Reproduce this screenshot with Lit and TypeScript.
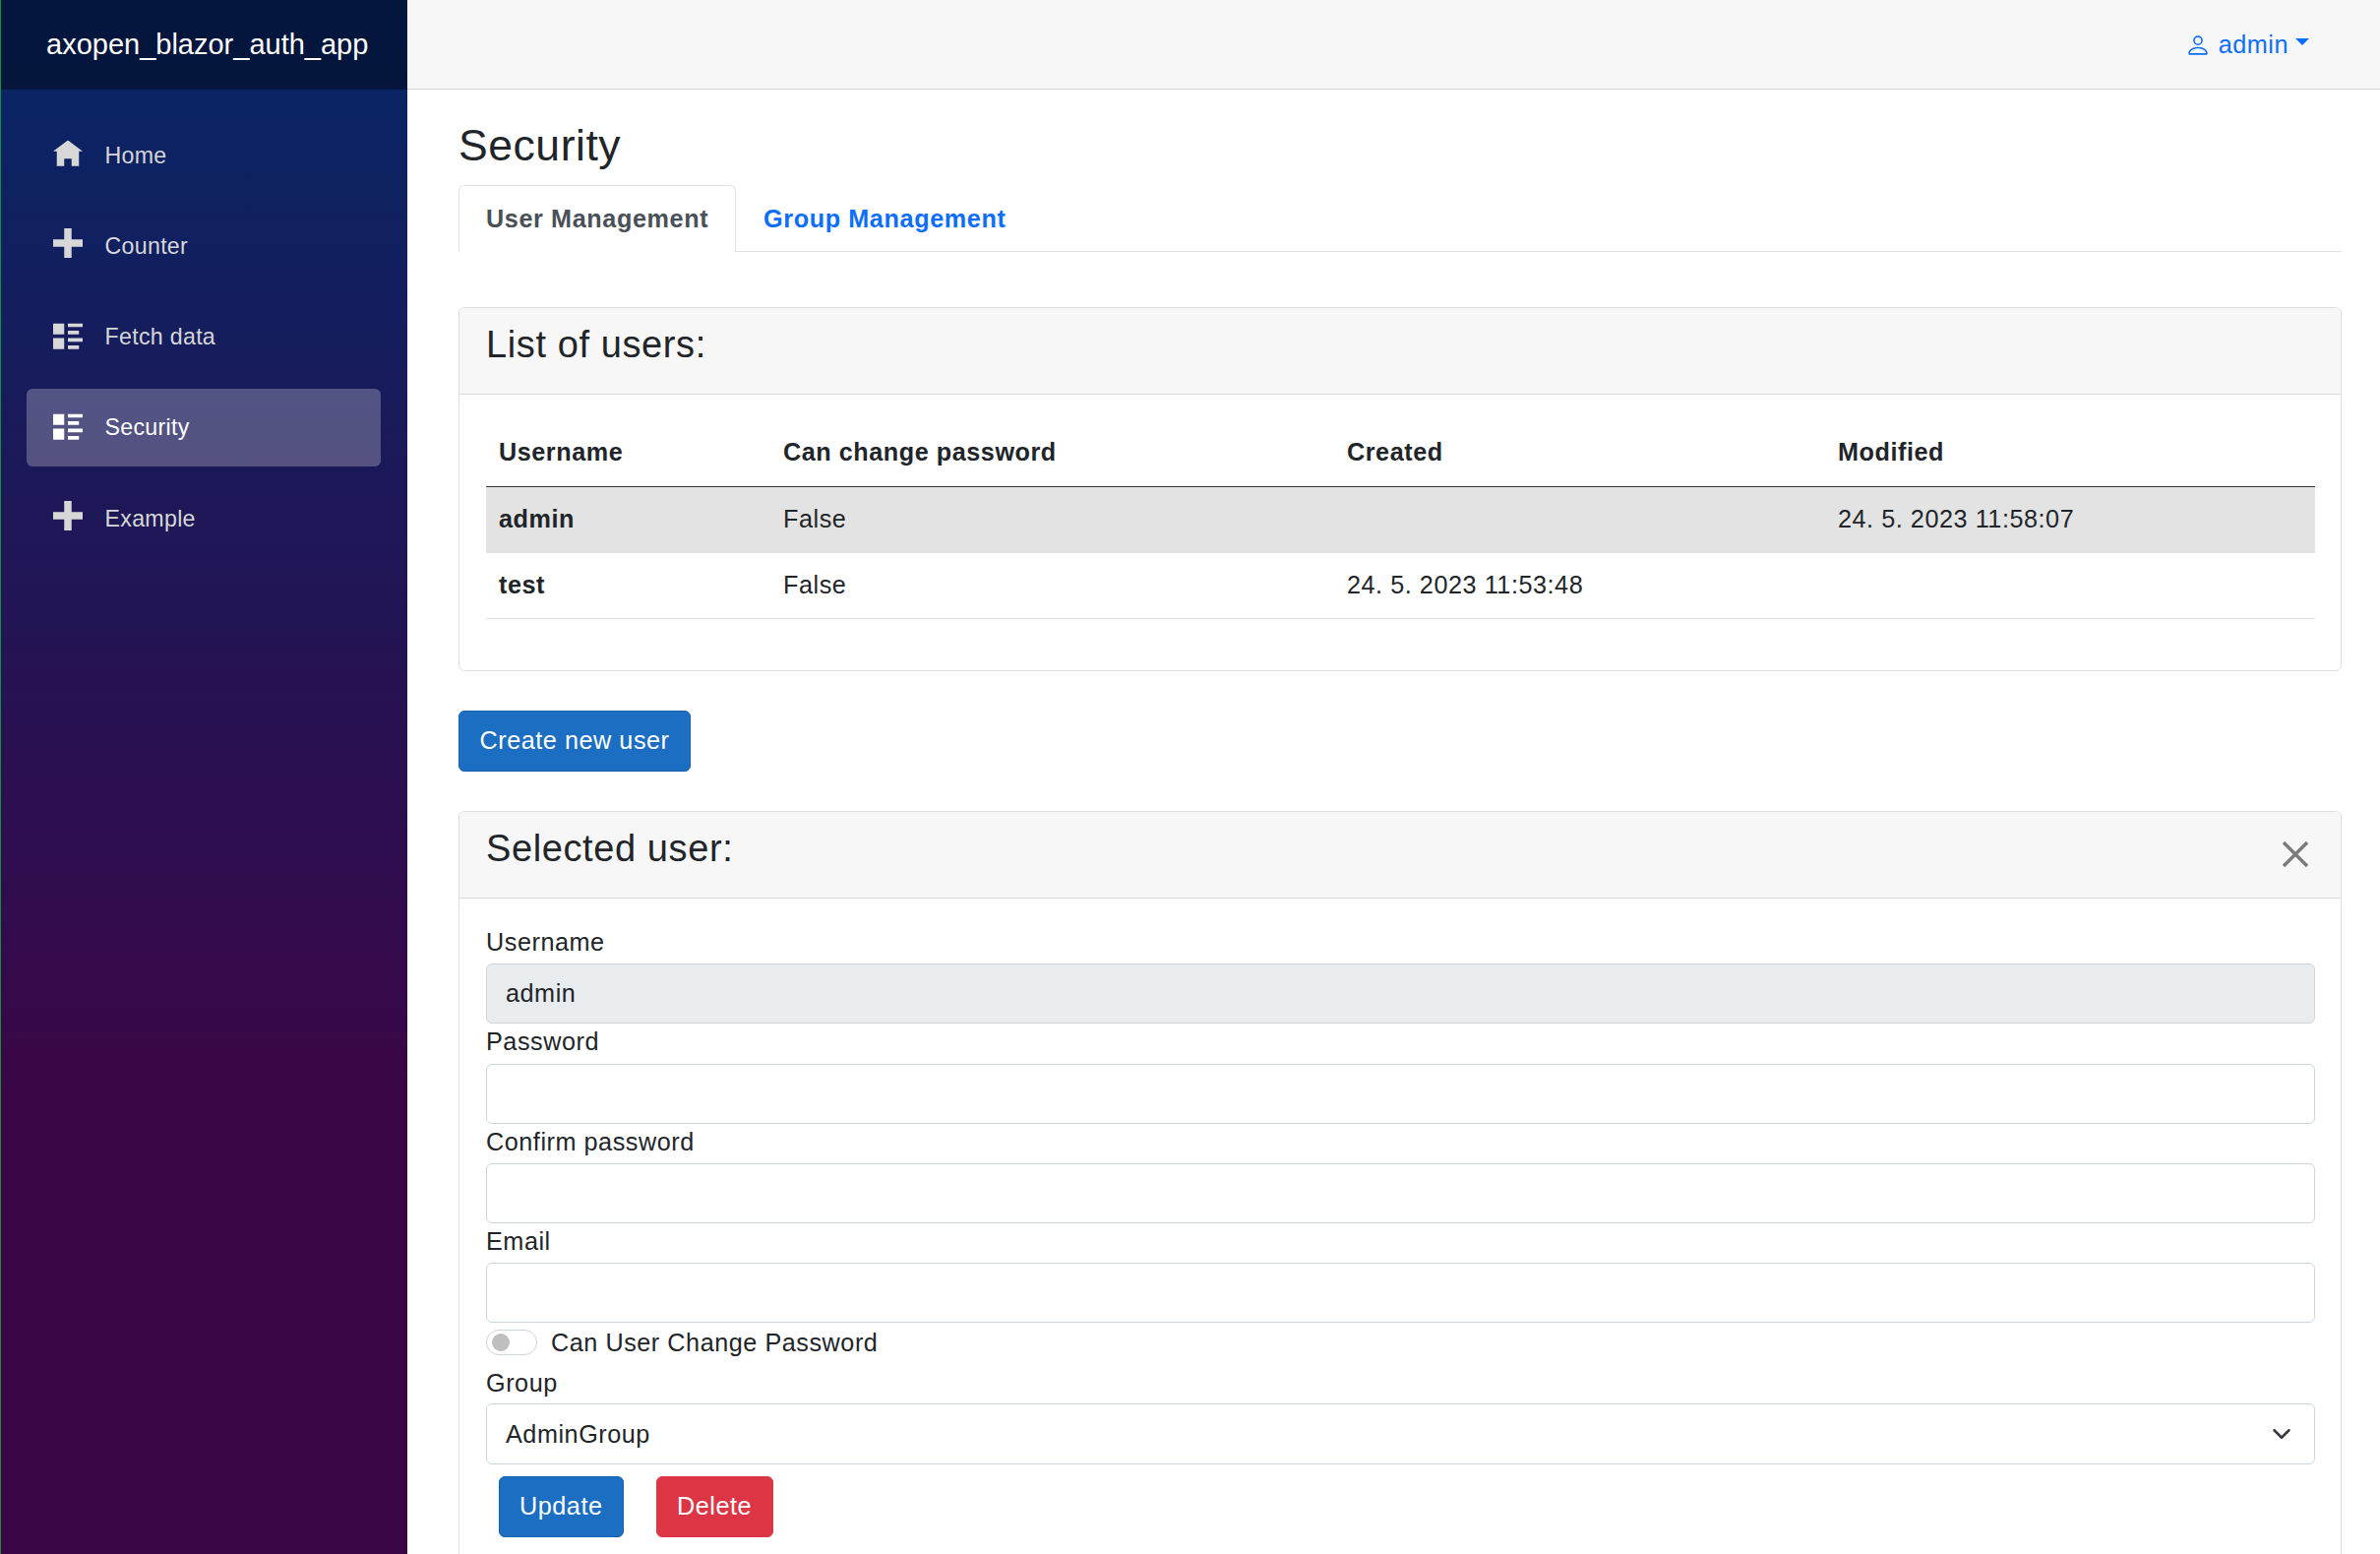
import { LitElement, html, css, svg } from "lit";
import { customElement } from "lit/decorators.js";

const ICONS: Record<string, string> = {
  home: "M4 0l-4 3h1v4h2v-2h2v2h2v-4.03l1 .03-4-3z",
  plus: "M3 0v3h-3v2h3v3h2v-3h3v-2h-3v-3h-2z",
  list: "M0 0v3h3v-3h-3zm4 0v1h4v-1h-4zm0 2v1h3v-1h-3zm-4 2v3h3v-3h-3zm4 0v1h4v-1h-4zm0 2v1h3v-1h-3z",
};
const NAV = [
  { label: "Home", icon: "home" },
  { label: "Counter", icon: "plus" },
  { label: "Fetch data", icon: "list" },
  { label: "Security", icon: "list", active: true },
  { label: "Example", icon: "plus" },
];
const USERS = [
  { name: "admin", change: "False", created: "", modified: "24. 5. 2023 11:58:07", selected: true },
  { name: "test", change: "False", created: "24. 5. 2023 11:53:48", modified: "", selected: false },
];

@customElement("app-root")
export class AppRoot extends LitElement {
  static styles = css`
    :host {
      display: flex;
      width: 2419px;
      height: 1579px;
      overflow: hidden;
      background: #fff;
      color: #212529;
      font-family: "Liberation Sans", Arial, sans-serif;
      font-size: 25.2px;
      letter-spacing: 0.55px;
      line-height: 37px;
    }
    * { box-sizing: border-box; }
    .sidebar {
      width: 414px;
      flex: none;
      border-left: 1px solid #12903f;
      background: linear-gradient(180deg, #052767 0%, #3a0647 70%);
      display: flex;
      flex-direction: column;
    }
    .brand {
      height: 91px;
      margin-bottom: 27px;
      background: rgba(0, 0, 0, 0.4);
      color: #fff;
      font-size: 29px;
      letter-spacing: 0;
      display: flex;
      align-items: center;
      padding-left: 46px;
    }
    .nav { display: flex; flex-direction: column; gap: 13.3px; padding: 0 26px; }
    .nav-link {
      height: 79px;
      display: flex;
      align-items: center;
      padding: 1px 0 0 27px;
      border-radius: 6px;
      color: #d7d7d7;
      font-size: 23.2px;
      letter-spacing: 0.3px;
      width: 360px;
    }
    .nav-link.active { background: rgba(255, 255, 255, 0.25); color: #fff; }
    .nav-link svg { width: 30px; height: 30px; fill: currentColor; margin-right: 22.5px; flex: none; }
    .nav-link svg.home { transform: translateY(-0.5px); }
    .nav-link svg.plus { transform: translateY(-3px); }
    .nav-link svg.list { transform: translateY(0.5px); }
    .main { flex: 1; min-width: 0; display: flex; flex-direction: column; }
    .topbar {
      height: 91px;
      flex: none;
      background: #f7f7f7;
      border-bottom: 1px solid #d6d5d5;
      display: flex;
      align-items: center;
      justify-content: flex-end;
      padding-right: 72px;
      color: #0d6efd;
    }
    .topbar .person { width: 26px; height: 26px; fill: currentColor; margin-right: 8px; margin-top: 2px; }
    .caret {
      width: 0; height: 0; margin-left: 7px; margin-bottom: 6px;
      border-top: 7px solid currentColor;
      border-left: 7px solid transparent;
      border-right: 7px solid transparent;
    }
    .content { padding: 31px 39.5px 0 52px; }
    h3 { margin: 0 0 14px; font-weight: 400; font-size: 44.5px; line-height: 52px; letter-spacing: 0.55px; }
    .tabs { display: flex; height: 68px; border-bottom: 1px solid #dee2e6; margin-bottom: 56px; }
    .tab {
      height: 68px;
      width: 282px;
      padding: 0 27px;
      font-weight: 700;
      letter-spacing: 0.62px;
      line-height: 66px;
      color: #0d6efd;
      white-space: nowrap;
      border: 1px solid transparent;
      border-radius: 6px 6px 0 0;
    }
    .tab.active { color: #495057; background: #fff; border-color: #dee2e6 #dee2e6 #fff; }
    .card { border: 1px solid rgba(0, 0, 0, 0.125); border-radius: 6px; }
    .card-header {
      height: 88px;
      position: relative;
      padding: 13px 27px;
      background: #f7f7f7;
      border-bottom: 1px solid rgba(0, 0, 0, 0.125);
      border-radius: 6px 6px 0 0;
    }
    h4 { margin: 0; font-weight: 400; font-size: 38px; line-height: 48px; letter-spacing: 0.6px; }
    .close { position: absolute; right: 32px; top: 29px; width: 28px; height: 28px; stroke: #7b7b7b; stroke-width: 3.4; fill: none; }
    .users-body { padding: 27px 26px 52px 27px; }
    table { width: 100%; border-collapse: collapse; table-layout: fixed; }
    th, td { text-align: left; padding: 0 13px; font-weight: 400; }
    thead th { height: 66px; font-weight: 700; border-bottom: 1px solid #34373a; padding-bottom: 3px; }
    tbody td { height: 67px; padding-bottom: 1px; border-bottom: 1px solid #dee2e6; }
    tbody tr.sel td { background: #e3e3e3; }
    tbody td.name { font-weight: 700; }
    .btn {
      display: inline-flex;
      align-items: center;
      height: 62px;
      padding: 0 20.5px 2px;
      border-radius: 6px;
      border: 1px solid #1861ac;
      background: #1b6ec2;
      color: #fff;
      font: inherit;
      letter-spacing: inherit;
    }
    .btn.danger { background: #dc3545; border-color: #dc3545; }
    .create { margin: 40.5px 0 40px; display: block; }
    .form-body { padding: 26px 26px 40px 27px; }
    label { display: block; margin-bottom: 3.3px; }
    label.tight { margin-bottom: 2.3px; }
    .input {
      display: block;
      width: 100%;
      height: 61px;
      padding: 0 19px;
      border: 1px solid #ced4da;
      border-radius: 6px;
      font: inherit;
      letter-spacing: inherit;
      color: #212529;
      background: #fff;
    }
    .input:disabled { background: #e9ecef; opacity: 1; }
    .switch-row { display: flex; align-items: center; gap: 14px; height: 26px; margin: 7px 0 10px; }
    .switch { position: relative; width: 52px; height: 26px; border: 1px solid #ced4da; border-radius: 13px; background: #fff; flex: none; }
    .switch::after { content: ""; position: absolute; left: 5px; top: 3px; width: 18px; height: 18px; border-radius: 50%; background: #bfbfbf; }
    .select-wrap { position: relative; height: 62px; }
    select.input { height: 62px; appearance: none; -webkit-appearance: none; }
    .chev { position: absolute; right: 24px; top: 21px; width: 20px; height: 20px; fill: none; stroke: #343a40; stroke-width: 2; stroke-linecap: round; stroke-linejoin: round; pointer-events: none; }
    .actions { display: flex; gap: 33px; margin: 12px 0 0 13px; }
    .actions .btn { height: 62px; padding: 0 20px 1px; }
    .actions .btn.danger { padding: 0 20.5px 1px; }
  `;

  private field(name: string, value = "", disabled = false) {
    return html`<label>${name}</label><input class="input" .value=${value} ?disabled=${disabled} />`;
  }

  render() {
    return html`
      <aside class="sidebar">
        <div class="brand">axopen_blazor_auth_app</div>
        <nav class="nav">
          ${NAV.map(
            (n) => html`<a class="nav-link ${n.active ? "active" : ""}">
              <svg class=${n.icon} viewBox="0 0 8 8">${svg`<path d=${ICONS[n.icon]} />`}</svg>${n.label}
            </a>`
          )}
        </nav>
      </aside>
      <div class="main">
        <header class="topbar">
          <svg class="person" viewBox="0 0 16 16"><path d="M8 8a3 3 0 1 0 0-6 3 3 0 0 0 0 6Zm2-3a2 2 0 1 1-4 0 2 2 0 0 1 4 0Zm4 8c0 1-1 1-1 1H3s-1 0-1-1 1-4 6-4 6 3 6 4Zm-1-.004c-.001-.246-.154-.986-.832-1.664C11.516 10.68 10.289 10 8 10c-2.29 0-3.516.68-4.168 1.332-.678.678-.83 1.418-.832 1.664h10Z" /></svg>
          admin<span class="caret"></span>
        </header>
        <div class="content">
          <h3>Security</h3>
          <div class="tabs">
            <div class="tab active">User Management</div>
            <div class="tab">Group Management</div>
          </div>
          <section class="card">
            <div class="card-header"><h4>List of users:</h4></div>
            <div class="users-body">
              <table>
                <colgroup><col style="width:289px" /><col style="width:573px" /><col style="width:499px" /><col /></colgroup>
                <thead><tr><th>Username</th><th>Can change password</th><th>Created</th><th>Modified</th></tr></thead>
                <tbody>
                  ${USERS.map(
                    (u) => html`<tr class=${u.selected ? "sel" : ""}>
                      <td class="name">${u.name}</td><td>${u.change}</td><td>${u.created}</td><td>${u.modified}</td>
                    </tr>`
                  )}
                </tbody>
              </table>
            </div>
          </section>
          <button class="btn create">Create new user</button>
          <section class="card">
            <div class="card-header">
              <h4>Selected user:</h4>
              <svg class="close" viewBox="0 0 28 28"><path d="M2 2 26 26M26 2 2 26" /></svg>
            </div>
            <div class="form-body">
              ${this.field("Username", "admin", true)}
              ${this.field("Password")}
              ${this.field("Confirm password")}
              ${this.field("Email")}
              <div class="switch-row"><span class="switch"></span><span>Can User Change Password</span></div>
              <label class="tight">Group</label>
              <div class="select-wrap">
                <select class="input"><option>AdminGroup</option></select>
                <svg class="chev" viewBox="0 0 16 16"><path d="m2 5 6 6 6-6" /></svg>
              </div>
              <div class="actions">
                <button class="btn">Update</button>
                <button class="btn danger">Delete</button>
              </div>
            </div>
          </section>
        </div>
      </div>
    `;
  }
}
